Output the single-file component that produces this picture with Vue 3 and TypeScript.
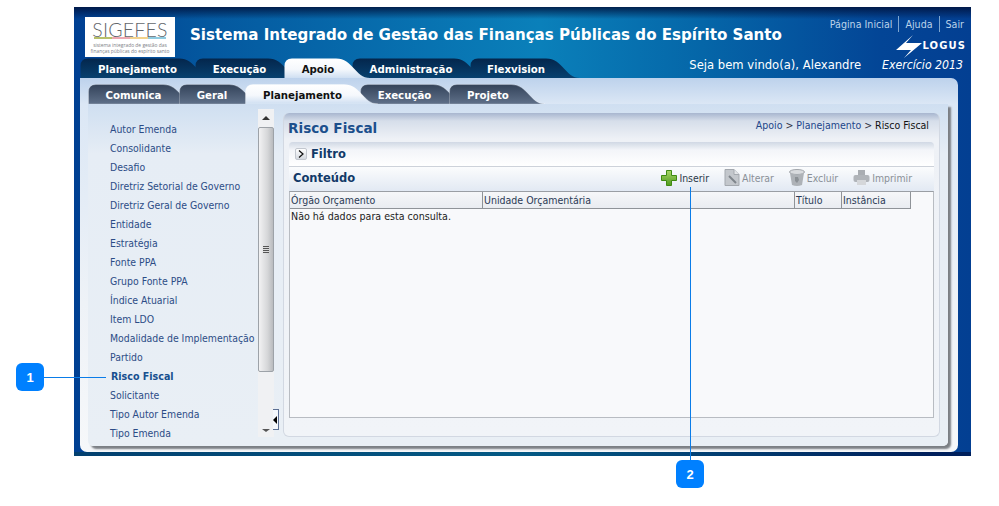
<script setup lang="ts">
interface Tab { label: string; w: number; active?: boolean }
const mainTabs: Tab[] = [
  { label: 'Planejamento', w: 115 },
  { label: 'Execução', w: 89 },
  { label: 'Apoio', w: 68, active: true },
  { label: 'Administração', w: 118 },
  { label: 'Flexvision', w: 92 },
]
const subTabs: Tab[] = [
  { label: 'Comunica', w: 91 },
  { label: 'Geral', w: 66 },
  { label: 'Planejamento', w: 115, active: true },
  { label: 'Execução', w: 89 },
  { label: 'Projeto', w: 78 },
]
const menu = ['Autor Emenda', 'Consolidante', 'Desafio', 'Diretriz Setorial de Governo', 'Diretriz Geral de Governo', 'Entidade', 'Estratégia', 'Fonte PPA', 'Grupo Fonte PPA', 'Índice Atuarial', 'Item LDO', 'Modalidade de Implementação', 'Partido', 'Risco Fiscal', 'Solicitante', 'Tipo Autor Emenda', 'Tipo Emenda']
const columns = [
  { label: 'Órgão Orçamento', w: 193 },
  { label: 'Unidade Orçamentária', w: 312 },
  { label: 'Título', w: 47 },
  { label: 'Instância', w: 69 },
]
function tabPath(w: number): string {
  return `M0.5 20V8Q0.5 0.5 8 0.5H${w - 16}C${w + 1} 0.5 ${w + 3} 20 ${w + 18} 20Z`
}
</script>

<template>
  <div class="page">
    <svg class="defs" width="0" height="0" aria-hidden="true">
      <defs>
        <linearGradient id="gMain" x1="0" y1="0" x2="0" y2="1"><stop offset="0" stop-color="#04264c" /><stop offset="1" stop-color="#07406f" /></linearGradient>
        <linearGradient id="gSub" x1="0" y1="0" x2="0" y2="1"><stop offset="0" stop-color="#33435a" /><stop offset="1" stop-color="#5f7089" /></linearGradient>
        <linearGradient id="gActive" x1="0" y1="0" x2="0" y2="1"><stop offset="0" stop-color="#ffffff" /><stop offset="0.55" stop-color="#f5f8fc" /><stop offset="1" stop-color="#cfdff2" /></linearGradient>
        <linearGradient id="gPlus" x1="0" y1="0" x2="0" y2="1"><stop offset="0" stop-color="#a9d768" /><stop offset="1" stop-color="#4f9a1e" /></linearGradient>
      </defs>
    </svg>
    <div class="frame">
      <header class="head">
        <div class="logo">
          <span class="logo-word">SIGEFES</span>
          <span class="logo-bar"><i class="c1"></i><i class="c2"></i><i class="c3"></i><i class="c4"></i></span>
          <span class="logo-sub">sistema integrado de gestão das</span>
          <span class="logo-sub">finanças públicas do espírito santo</span>
        </div>
        <h1 class="title">Sistema Integrado de Gestão das Finanças Públicas do Espírito Santo</h1>
        <div class="head-right">
          <nav class="links"><a>Página Inicial</a><a>Ajuda</a><a>Sair</a></nav>
          <div class="logus">
            <svg width="27" height="23" viewBox="0 0 27 23"><path d="M18 0 1 15H16L9 23 27 8H11Z" fill="#fff" /></svg>
            <span>LOGUS</span>
          </div>
        </div>
      </header>
      <div class="tabrow">
        <div class="tabs main">
          <div v-for="t in mainTabs" :key="t.label" class="tab" :class="{ active: t.active }" :style="{ width: t.w + 'px' }">
            <svg class="tab-bg" :width="t.w + 18" height="20"><path :d="tabPath(t.w)" :fill="t.active ? 'url(#gActive)' : 'url(#gMain)'" /></svg>
            <span>{{ t.label }}</span>
          </div>
        </div>
        <div class="welcome"><span>Seja bem vindo(a), Alexandre</span><em>Exercício 2013</em></div>
      </div>
      <div class="shell">
        <div class="tabs sub">
          <div v-for="t in subTabs" :key="t.label" class="tab" :class="{ active: t.active }" :style="{ width: t.w + 'px' }">
            <svg class="tab-bg" :width="t.w + 18" height="20"><path :d="tabPath(t.w)" :fill="t.active ? 'url(#gActive)' : 'url(#gSub)'" stroke="#ffffff" stroke-opacity=".25" /></svg>
            <span>{{ t.label }}</span>
          </div>
        </div>
        <div class="inner">
          <ul class="menu">
            <li v-for="m in menu" :key="m" :class="{ current: m === 'Risco Fiscal' }">{{ m }}</li>
          </ul>
          <div class="scroll">
            <i class="arrow up"></i>
            <div class="thumb"><span class="grip"></span></div>
            <i class="arrow down"></i>
          </div>
          <div class="splitter"><span class="toggle"></span></div>
          <main class="content">
            <div class="content-head">
              <h2>Risco Fiscal</h2>
              <div class="crumbs"><a>Apoio</a> &gt; <a>Planejamento</a> &gt; <b>Risco Fiscal</b></div>
            </div>
            <div class="box">
              <div class="filter"><span class="expander"><svg width="8" height="8" viewBox="0 0 8 8"><path d="M2 0.5 6 4 2 7.5" fill="none" stroke="#111" stroke-width="1.2" /></svg></span><strong>Filtro</strong></div>
              <div class="bar">
                <strong>Conteúdo</strong>
                <div class="tools">
                  <span class="tool on">
                    <svg width="16" height="16" viewBox="0 0 16 16"><path d="M5.5 .5h5v5h5v5h-5v5h-5v-5h-5v-5h5z" fill="url(#gPlus)" stroke="#3f8a12" /></svg>Inserir
                  </span>
                  <span class="tool">
                    <svg width="16" height="17" viewBox="0 0 16 17"><path d="M1 .5h9l5 5v11H1z" fill="#c3c7cc" stroke="#a4a9af" /><path d="M10 .5v5h5" fill="#e4e6e9" stroke="#a4a9af" /><path d="M5 7l7 7" stroke="#7f858c" stroke-width="2" /></svg>Alterar
                  </span>
                  <span class="tool">
                    <svg width="16" height="18" viewBox="0 0 16 18"><ellipse cx="8" cy="3" rx="7.5" ry="2.5" fill="#d9dbde" stroke="#a2a6ab" /><path d="M1 4l2 12q5 2 10 0l2-12q-7 3-14 0z" fill="#aeb2b7" /><path d="M6 8l3 0 1 3-2 3-2-2z" fill="#8b9095" /></svg>Excluir
                  </span>
                  <span class="tool">
                    <svg width="17" height="15" viewBox="0 0 17 15"><rect x="5" y="0" width="7" height="6" fill="#a9adb2" /><rect x="0.5" y="5" width="16" height="7" rx="2" fill="#b0b4b9" /><rect x="4" y="10" width="9" height="5" fill="#d5d7da" /></svg>Imprimir
                  </span>
                </div>
              </div>
              <div class="table">
                <div class="thead">
                  <div v-for="c in columns" :key="c.label" class="th" :style="{ width: c.w + 'px' }">{{ c.label }}</div>
                </div>
                <div class="empty">Não há dados para esta consulta.</div>
              </div>
            </div>
          </main>
        </div>
      </div>
      <div class="foot"></div>
    </div>
    <div class="callout one"><span>1</span></div>
    <div class="line-h"></div>
    <div class="line-v"></div>
    <div class="callout two"><span>2</span></div>
  </div>
</template>

<style>
html, body { margin: 0; background: #fff; }
</style>

<style scoped>
.page { position: relative; height: 506px; width: 999px; overflow: hidden; padding-top: 7px; box-sizing: border-box; font-family: "DejaVu Sans Condensed", "Open Sans", sans-serif; font-size: 10.4px; }
.defs { position: absolute; }
.frame { margin-left: 74px; width: 897px; height: 449px; display: flex; flex-direction: column; box-sizing: border-box; background: linear-gradient(180deg, rgba(0,18,60,.85) 0, rgba(0,30,80,0) 12px), linear-gradient(90deg, #003f92 0, #04589f 15%, #0a80ba 52%, #0566a8 70%, #034596 90%, #033f92 100%); }
.head { height: 51px; display: flex; align-items: flex-start; padding: 10px 6px 0 11px; box-sizing: border-box; position: relative; }
.logo { flex: none; width: 90px; height: 40px; background: #fff; display: flex; flex-direction: column; align-items: center; box-sizing: border-box; padding-top: 5px; color: #7d8186; }
.logo-word { font-family: "Lato", sans-serif; font-weight: 300; font-size: 19.5px; line-height: 15px; letter-spacing: .2px; color: #63676c; }
.logo-bar { display: flex; width: 72px; height: 2px; margin-bottom: 3px; }
.logo-bar i { flex: 1; }
.c1 { background: #b7c06a; } .c2 { background: #eda8b2; } .c3 { background: #f2d28c; } .c4 { background: #8fcbe0; }
.logo-sub { font-family: "Open Sans", sans-serif; font-size: 4.9px; line-height: 6px; white-space: nowrap; }
.title { margin: 6px 0 0 15px; font-family: "DejaVu Sans", sans-serif; font-weight: 700; font-size: 15.1px; line-height: 24px; color: #fff; white-space: nowrap; flex: 1; }
.head-right { flex: none; display: flex; flex-direction: column; align-items: flex-end; margin-top: -1px; }
.links { display: flex; line-height: 16px; color: #bcd3ea; white-space: nowrap; font-size: 10.6px; padding-right: 1px; }
.links a { padding: 0 6px; border-left: 1px solid #7fa6cf; }
.links a:first-child { border: 0; }
.links a:last-child { padding-right: 0; }
.logus { display: flex; align-items: flex-start; margin-top: 3px; height: 21px; }
.logus span { font-family: "DejaVu Sans", sans-serif; font-weight: 700; font-size: 10px; line-height: 12px; letter-spacing: 1.1px; color: #fff; margin: 5px -1px 0 0; }
.tabrow { height: 20px; display: flex; justify-content: space-between; padding: 0 8px 0 6px; }
.tabs { display: flex; height: 20px; }
.tab { position: relative; height: 20px; display: flex; align-items: center; justify-content: center; box-sizing: border-box; font-family: "DejaVu Sans", sans-serif; font-weight: 700; font-size: 10.2px; color: #fff; }
.tab span { position: relative; white-space: nowrap; padding-top: 2px; }
.tab-bg { position: absolute; left: 0; top: 0; }
.tab.active { z-index: 2; color: #111; }
.welcome { display: flex; gap: 21px; color: #fff; font-size: 12.9px; line-height: 14px; white-space: nowrap; }
.welcome em { font-style: italic; font-size: 12.2px; }
.shell { flex: 1; margin: 0 13px 0 6px; padding: 6px 10px 6px 8px; border-radius: 0 7px 7px 7px; background: linear-gradient(180deg, #bdd2ec 0, #dbe7f5 26px, #eef2f7 60%, #f6f8fa 100%); display: flex; flex-direction: column; min-height: 0; }
.tabs.sub { flex: none; }
.inner { flex: 1; min-height: 0; display: flex; background: linear-gradient(180deg, #cfdff1 0, #e6edf5 50px, #e9eff5 100%); box-shadow: 3px 3px 2px #7b7f84; border-radius: 0 0 5px 5px; }
.menu { list-style: none; margin: 0 0 4px; padding: 16px 0 0 22px; width: 170px; box-sizing: border-box; overflow: hidden; color: #2c4c86; }
.menu li { height: 19px; line-height: 19px; white-space: nowrap; }
.menu li.current { font-weight: 700; font-size: 10.6px; color: #17508f; padding-left: 1px; }
.scroll { width: 16px; margin: 5px 0 9px; background: #f0f1f3; display: flex; flex-direction: column; align-items: stretch; position: relative; }
.arrow { display: block; height: 18px; flex: none; position: relative; }
.arrow::after { content: ""; position: absolute; left: 4px; border-left: 4px solid transparent; border-right: 4px solid transparent; }
.arrow.up::after { top: 7px; border-bottom: 4px solid #333; }
.arrow.down::after { top: auto; bottom: 5px; border-top: 3px solid #555; }
.thumb { height: 245px; flex: none; box-sizing: border-box; border: 1px solid #9da2a8; border-radius: 2px; background: linear-gradient(90deg, #f2f2f3, #d6d7d9 60%, #b9bbbe); display: flex; align-items: center; justify-content: center; }
.grip { display: block; width: 6px; height: 7px; background: repeating-linear-gradient(180deg, #555 0 1px, #dcdcdc 1px 2px); }
.scroll .arrow.down { margin-top: auto; }
.splitter { width: 9px; display: flex; align-items: flex-end; padding-bottom: 16px; box-sizing: border-box; }
.toggle { display: block; width: 6px; height: 21px; margin-left: -1px; background: #f5f8fc; border: 1px solid #5b6f93; border-left: 0; box-sizing: border-box; position: relative; }
.toggle::after { content: ""; position: absolute; left: 0; top: 6px; border-top: 4px solid transparent; border-bottom: 4px solid transparent; border-right: 4px solid #000; }
.content { width: 657px; margin: 9px 0; box-sizing: border-box; border: 1px solid #d2d8e2; border-top: 0; border-radius: 6px; background: linear-gradient(180deg, #a8b6cf 0, #d6deea 8px, #eef1f6 26px, #f1f4f8 100%); padding: 0 5px 15px; display: flex; flex-direction: column; }
.content-head { height: 29px; flex: none; display: flex; justify-content: space-between; color: #1b4f8c; }
.content-head h2 { margin: 6px 0 0 -1px; font-family: "DejaVu Sans", sans-serif; font-size: 13.6px; line-height: 18px; font-weight: 700; }
.crumbs { margin: 5px 5px 0 0; line-height: 14px; color: #334; font-size: 10.5px; }
.crumbs a { color: #22468a; }
.crumbs b { font-weight: 400; color: #111; }
.box { flex: 1; display: flex; flex-direction: column; border-radius: 4px 4px 0 0; min-height: 0; }
.filter { height: 25px; flex: none; display: flex; align-items: center; gap: 4px; padding-left: 6px; box-sizing: border-box; background: linear-gradient(180deg, #d0d8e4 0, #f3f5f9 8px, #fff 100%); border-radius: 4px 4px 0 0; border-bottom: 1px solid #cdd2da; color: #123a68; }
.filter strong, .bar strong { font-family: "DejaVu Sans", sans-serif; font-weight: 700; font-size: 11.5px; color: #123a68; }
.expander { width: 12px; height: 12px; box-sizing: border-box; border: 1px solid #c2c7cf; border-radius: 2px; background: linear-gradient(180deg, #fff, #d4d9e0); display: flex; align-items: center; justify-content: center; }
.bar { height: 24px; flex: none; display: flex; align-items: center; justify-content: space-between; padding: 0 22px 3px 4px; box-sizing: border-box; background: linear-gradient(180deg, #fbfcfd 0, #e2e9f3 100%); }
.tools { display: flex; gap: 15px; color: #8a9097; }
.tool { display: flex; align-items: center; gap: 2px; line-height: 18px; white-space: nowrap; }
.tool.on { color: #2b3848; }
.table { flex: 1; min-height: 0; margin-bottom: 3px; border: 1px solid #b8bcc2; border-top-color: #9a9ea4; background: #f8f9fb; box-sizing: border-box; }
.thead { display: flex; height: 17px; }
.th { height: 17px; box-sizing: border-box; padding-left: 1px; line-height: 17px; font-size: 10.5px; border-right: 1px solid #8f9398; border-bottom: 1px solid #8f9398; background: linear-gradient(180deg, #f6f7f9, #e9ecf1); color: #2b3a55; white-space: nowrap; }
.empty { padding-left: 1px; line-height: 15px; font-size: 10.6px; color: #222; }
.foot { height: 4px; flex: none; background: linear-gradient(90deg, #03406f, #045a85 50%, #00205c 95%); margin: 0; }
.callout { position: absolute; width: 28px; height: 28px; border-radius: 6px; background: #0080ff; color: #fff; font-family: "Liberation Sans", sans-serif; font-weight: 700; font-size: 13px; display: flex; align-items: center; justify-content: center; }
.callout.one { left: 16px; top: 363px; }
.callout.two { left: 676px; top: 460px; }
.line-h { position: absolute; left: 44px; top: 377px; width: 62px; height: 1px; background: #0a7ce8; }
.line-v { position: absolute; left: 690px; top: 187px; width: 1px; height: 273px; background: #0a7ce8; }
</style>
